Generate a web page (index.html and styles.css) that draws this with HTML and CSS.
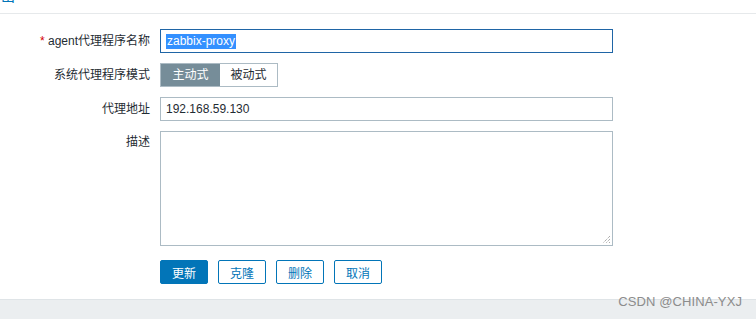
FILE: index.html
```html
<!DOCTYPE html>
<html>
<head>
<meta charset="utf-8">
<link rel="stylesheet" href="styles.css">
</head>
<body>
<div class="top"><span class="toplink">导出</span></div>
<div class="form">
  <div class="row">
    <label class="lbl"><span class="req">*</span> agent代理程序名称</label>
    <div class="field input focus"><span class="sel">zabbix-proxy</span></div>
  </div>
  <div class="row">
    <label class="lbl">系统代理程序模式</label>
    <div class="seg"><span class="seg-item on">主动式</span><span class="seg-item off">被动式</span></div>
  </div>
  <div class="row">
    <label class="lbl">代理地址</label>
    <div class="field input">192.168.59.130</div>
  </div>
  <div class="row">
    <label class="lbl lbl-top">描述</label>
    <div class="field textarea"><svg class="grip" width="9" height="9" viewBox="0 0 9 9"><path d="M8 1L1 8M8 4L4 8M8 7L7 8" stroke="#8a8a8a" stroke-width="1" stroke-dasharray="1 1" fill="none"/></svg></div>
  </div>
  <div class="row buttons">
    <span></span>
    <div class="btns">
      <button class="btn primary">更新</button>
      <button class="btn">克隆</button>
      <button class="btn">删除</button>
      <button class="btn">取消</button>
    </div>
  </div>
</div>
<div class="footer"></div>
<div class="wm">CSDN @CHINA-YXJ</div>
</body>
</html>
```
FILE: styles.css
```css
* { box-sizing: border-box; }
html, body { margin: 0; padding: 0; }
body {
  width: 756px;
  height: 319px;
  overflow: hidden;
  background: #fff;
  font-family: Arial, "Liberation Sans", "Noto Sans CJK SC", sans-serif;
  font-size: 12px;
  color: #1f2c33;
  position: relative;
}
.top {
  height: 14px;
  border-bottom: 1px solid #e6e9eb;
  overflow: hidden;
}
.toplink {
  display: block;
  margin-top: -11px;
  margin-left: -13px;
  color: #0275b8;
  font-size: 14px;
  line-height: 14px;
}
.form {
  padding-top: 15px;
  display: flex;
  flex-direction: column;
  gap: 10px;
}
.row {
  display: grid;
  grid-template-columns: 150px 453px;
  column-gap: 10px;
  align-items: center;
}
.lbl {
  text-align: right;
  line-height: 24px;
  white-space: nowrap;
}
.lbl-top { align-self: start; line-height: 22px; }
.req { color: #d40000; }
.field {
  border: 1px solid #acbbc4;
  background: #fff;
  padding: 0 5px;
}
.input {
  height: 24px;
  line-height: 22px;
}
.input.focus {
  border-color: #1f65a6;
}
.sel {
  background: #3390ff;
  color: #fff;
  display: inline-block;
  line-height: 15px;
  padding: 0 1px;
}
.textarea {
  height: 115px;
  position: relative;
}
.grip { position: absolute; right: 1px; bottom: 1px; }
.seg {
  display: flex;
  height: 24px;
  width: 118px;
  border: 1px solid #acbbc4;
}
.seg-item {
  line-height: 22px;
  text-align: center;
}
.seg-item.on {
  width: 59px;
  background: #768d99;
  color: #fff;
}
.seg-item.off {
  width: 57px;
  background: #fff;
}
.buttons { margin-top: 4px; }
.btns { display: flex; gap: 10px; }
.btn {
  width: 48px;
  height: 24px;
  padding: 0;
  border: 1px solid #0275b8;
  border-radius: 2px;
  background: #fff;
  color: #0275b8;
  font-family: Arial, "Liberation Sans", "Noto Sans CJK SC", sans-serif;
  font-size: 12px;
}
.btn.primary {
  background: #0275b8;
  color: #fff;
}
.footer {
  margin-top: 15px;
  height: 30px;
  background: #ebeef0;
  border-top: 1px solid #dfe4e7;
}
.wm {
  position: absolute;
  right: 14px;
  top: 294px;
  font-family: "Liberation Sans", Arial, sans-serif;
  font-size: 13px;
  color: #8c8c8c;
  letter-spacing: 0.1px;
}
```
